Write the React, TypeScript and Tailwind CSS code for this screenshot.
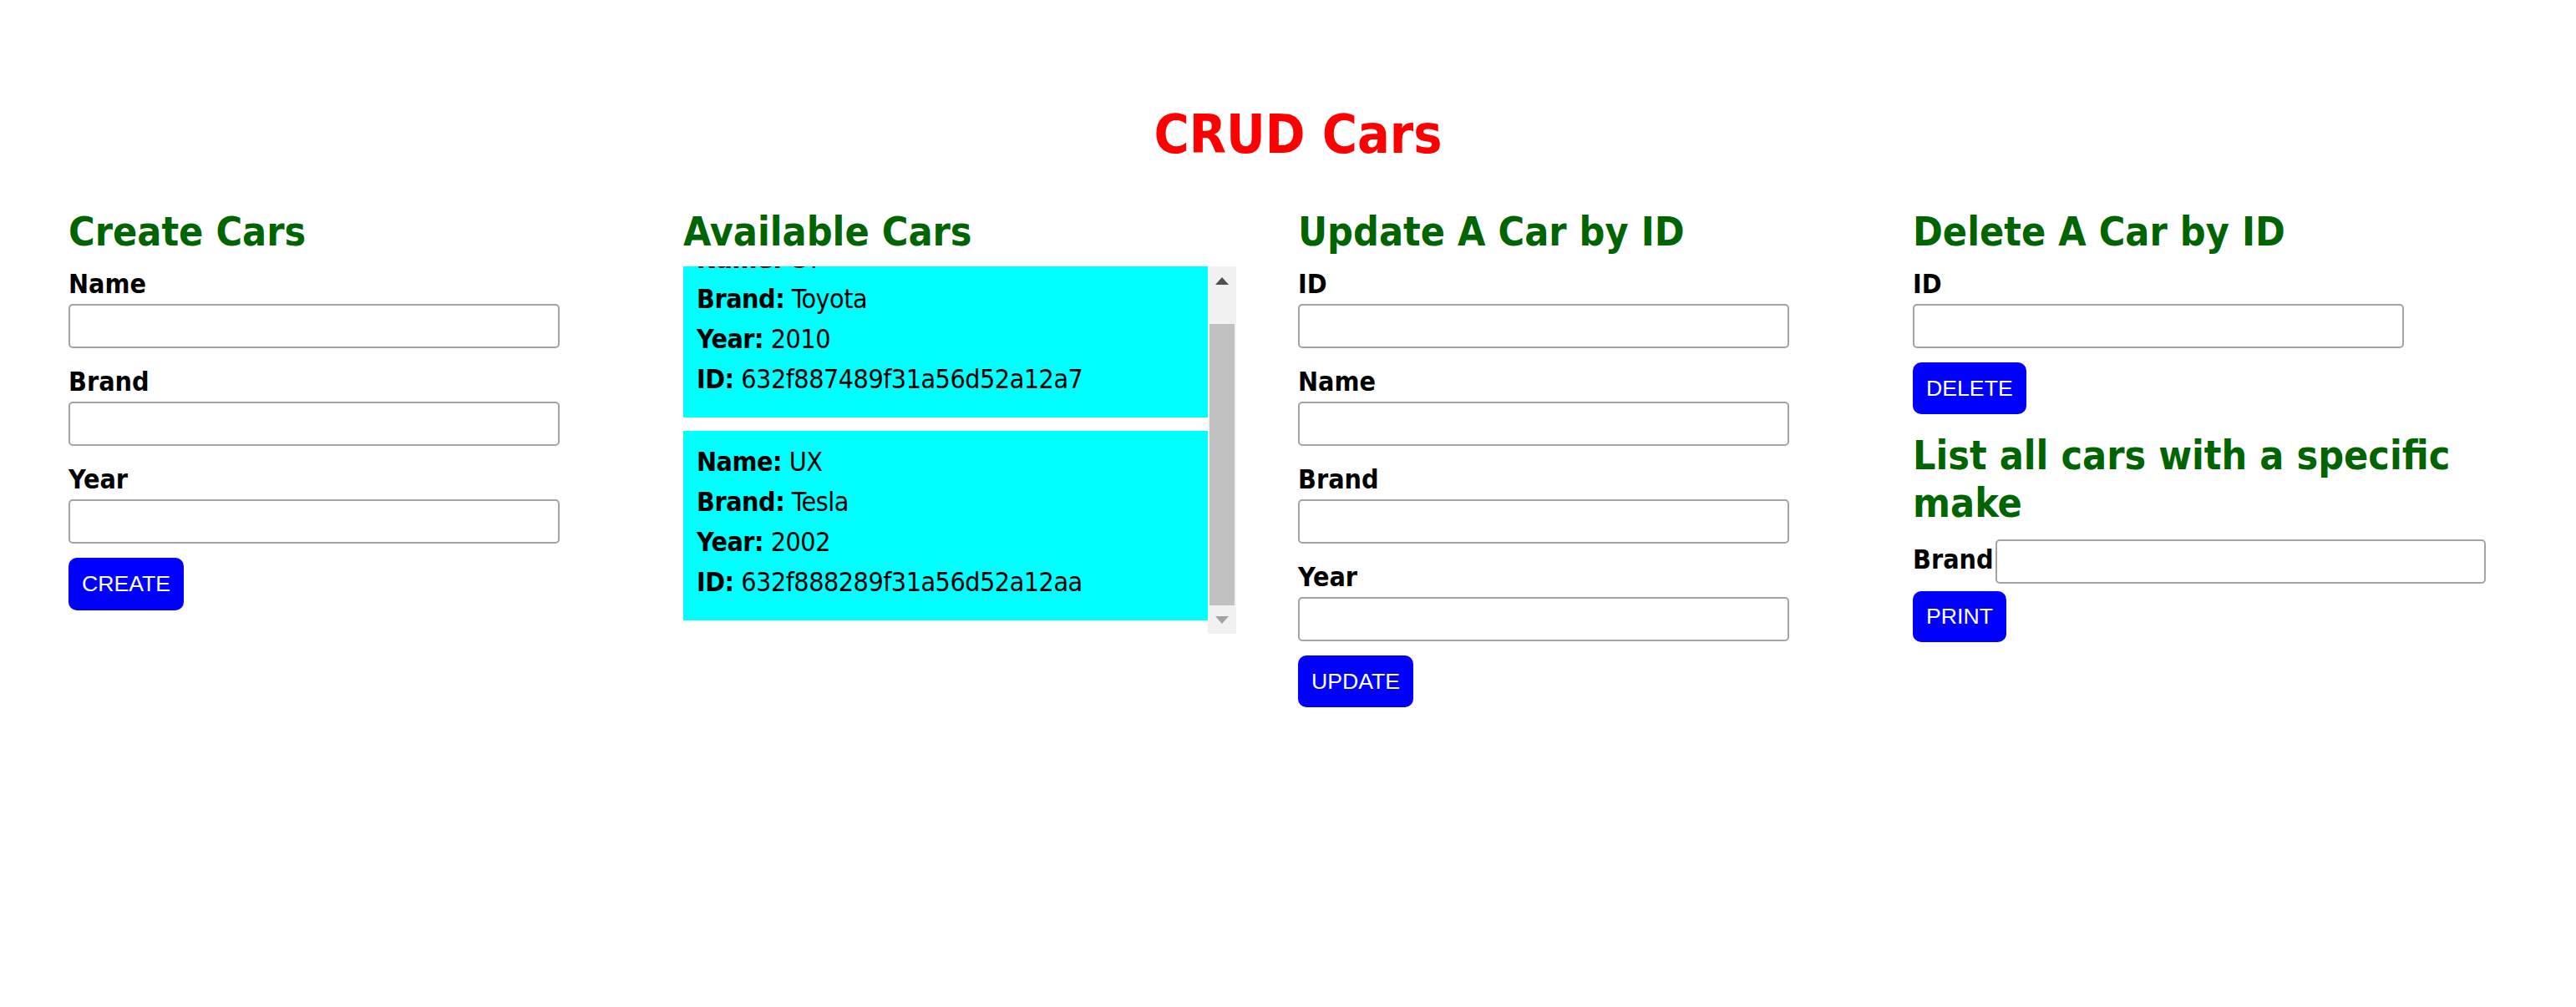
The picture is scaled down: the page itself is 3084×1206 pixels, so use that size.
import React, { useLayoutEffect, useRef } from "react";

const headingCls =
  "text-[48px] leading-[57px] font-bold text-[#006400]";
const labelCls = "block text-[32px] leading-[38px] font-bold text-black";
const inputCls =
  "block h-[53px] w-[588px] rounded-[5px] border-2 border-[#a3a3a3] bg-white px-2 text-[26.67px] [font-family:'Liberation_Sans',Arial,sans-serif] outline-none";
const buttonCls =
  "block rounded-[10px] bg-[#0000ff] px-4 text-[26.67px] leading-none text-white [font-family:'Liberation_Sans',Arial,sans-serif]";

function Field({ label, first }: { label: string; first?: boolean }) {
  return (
    <div className={first ? "mt-[15px]" : "mt-[21px]"}>
      <label className={labelCls}>{label}</label>
      <input type="text" className={"mt-[5px] " + inputCls} />
    </div>
  );
}

type Car = { name: string; brand: string; year: string; id: string };

const cars: Car[] = [
  { name: "GT", brand: "Toyota", year: "2010", id: "632f887489f31a56d52a12a7" },
  { name: "UX", brand: "Tesla", year: "2002", id: "632f888289f31a56d52a12aa" },
];

function CarCard({ car }: { car: Car }) {
  return (
    <div className="mb-[16px] bg-[#00ffff] pb-[22px] pl-[16px] pt-[13px] text-[32px] leading-[48px] tracking-[-0.5px] text-black">
      <div>
        <b>Name:</b> {car.name}
      </div>
      <div>
        <b>Brand:</b> {car.brand}
      </div>
      <div>
        <b>Year:</b> {car.year}
      </div>
      <div>
        <b>ID:</b> {car.id}
      </div>
    </div>
  );
}

function CarList() {
  const ref = useRef<HTMLDivElement>(null);
  useLayoutEffect(() => {
    if (ref.current) ref.current.scrollTop = ref.current.scrollHeight;
  }, []);
  return (
    <div className="mt-[13px] flex">
      <div
        ref={ref}
        className="h-[440px] w-[628px] overflow-y-scroll [scrollbar-width:none]"
      >
        {cars.map((c) => (
          <CarCard key={c.id} car={c} />
        ))}
      </div>
      <div className="flex h-[440px] w-[34px] flex-col bg-[#f1f1f1]">
        <div className="flex h-[34px] items-center justify-center">
          <svg width="16" height="9" viewBox="0 0 16 9">
            <polygon points="8,0 16,9 0,9" fill="#505050" />
          </svg>
        </div>
        <div className="flex flex-1 flex-col justify-end">
          <div className="mx-[2px] h-[337px] bg-[#c1c1c1]" />
        </div>
        <div className="flex h-[34px] items-center justify-center">
          <svg width="16" height="9" viewBox="0 0 16 9">
            <polygon points="0,0 16,0 8,9" fill="#a3a3a3" />
          </svg>
        </div>
      </div>
    </div>
  );
}

export default function App() {
  return (
    <div className="min-h-[1206px] bg-white [font-family:Tahoma,'DejaVu_Sans_Condensed','DejaVu_Sans',sans-serif]">
      <div className="ml-[82px] w-[2944px] pt-[129px]">
        <h1 className="text-center text-[64px] leading-[64px] font-bold text-[#ff0000]">
          CRUD Cars
        </h1>
        <div className="mt-[56px] grid grid-cols-[repeat(4,736px)]">
          {/* Create */}
          <div>
            <h2 className={headingCls}>Create Cars</h2>
            <Field label="Name" first />
            <Field label="Brand" />
            <Field label="Year" />
            <button className={"mt-[17px] h-[63px] " + buttonCls}>CREATE</button>
          </div>
          {/* Available */}
          <div>
            <h2 className={headingCls}>Available Cars</h2>
            <CarList />
          </div>
          {/* Update */}
          <div>
            <h2 className={headingCls}>Update A Car by ID</h2>
            <Field label="ID" first />
            <Field label="Name" />
            <Field label="Brand" />
            <Field label="Year" />
            <button className={"mt-[17px] h-[62px] " + buttonCls}>UPDATE</button>
          </div>
          {/* Delete + list */}
          <div>
            <h2 className={headingCls}>Delete A Car by ID</h2>
            <Field label="ID" first />
            <button className={"mt-[17px] h-[62px] " + buttonCls}>DELETE</button>
            <h2 className={"mt-[21px] " + headingCls}>
              List all cars with a specific make
            </h2>
            <div className="mt-[15px] flex items-baseline">
              <label className="text-[32px] leading-[38px] font-bold text-black">
                Brand
              </label>
              <input
                type="text"
                className="ml-[2px] block h-[53px] w-[587px] rounded-[5px] border-2 border-[#a3a3a3] bg-white px-2 text-[26.67px] [font-family:'Liberation_Sans',Arial,sans-serif] outline-none"
              />
            </div>
            <button className={"mt-[9px] h-[61px] " + buttonCls}>PRINT</button>
          </div>
        </div>
      </div>
    </div>
  );
}
